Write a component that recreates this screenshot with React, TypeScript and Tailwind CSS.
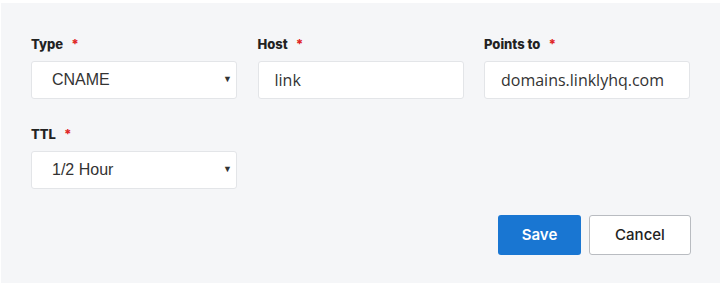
import React from "react";

function Label({ text }: { text: string }) {
  return (
    <div className="h-[16px] mb-[8px] flex items-center text-[13px] font-extrabold text-[#222]" style={{ fontFamily: "Inter, sans-serif" }}>
      {text}
      <span className="ml-[8px] text-[#e02424]">*</span>
    </div>
  );
}

function SelectBox({ value }: { value: string }) {
  return (
    <div className="h-[38px] w-[206px] bg-white border border-[#e3e5e8] rounded-[3px] flex items-center justify-between pl-[20px] pr-[4px] text-[16px] text-[#333]" style={{ fontFamily: "'Liberation Sans', Arial, sans-serif" }}>
      <span>{value}</span>
      <span className="text-[9px] text-[#333]">▼</span>
    </div>
  );
}

function InputBox({ value }: { value: string }) {
  return (
    <div className="h-[38px] w-[206px] bg-white border border-[#e3e5e8] rounded-[3px] flex items-center pl-[16px] text-[16px] text-[#333]" style={{ fontFamily: "'Open Sans', sans-serif" }}>
      {value}
    </div>
  );
}

export default function App() {
  return (
    <div className="w-[724px] h-[285px] bg-white pt-[3px] pl-[1px]">
      <div className="w-[719px] h-[280px] bg-[#f5f6f8] pt-[34px] pl-[30px] pr-[29px]">
        <div className="flex gap-[20.5px]">
          <div>
            <Label text="Type" />
            <SelectBox value="CNAME" />
          </div>
          <div>
            <Label text="Host" />
            <InputBox value="link" />
          </div>
          <div>
            <Label text="Points to" />
            <InputBox value="domains.linklyhq.com" />
          </div>
        </div>
        <div className="mt-[28px]">
          <Label text="TTL" />
          <SelectBox value="1/2 Hour" />
        </div>
        <div className="mt-[26px] flex justify-end gap-[8px]" style={{ fontFamily: "Inter, sans-serif" }}>
          <button className="w-[83px] h-[40px] rounded-[3px] bg-[#1976d2] text-white text-[15px] font-semibold">Save</button>
          <button className="w-[102px] h-[40px] rounded-[3px] bg-white border border-[#b9bcc1] text-[#222] text-[15px] font-medium">Cancel</button>
        </div>
      </div>
    </div>
  );
}
